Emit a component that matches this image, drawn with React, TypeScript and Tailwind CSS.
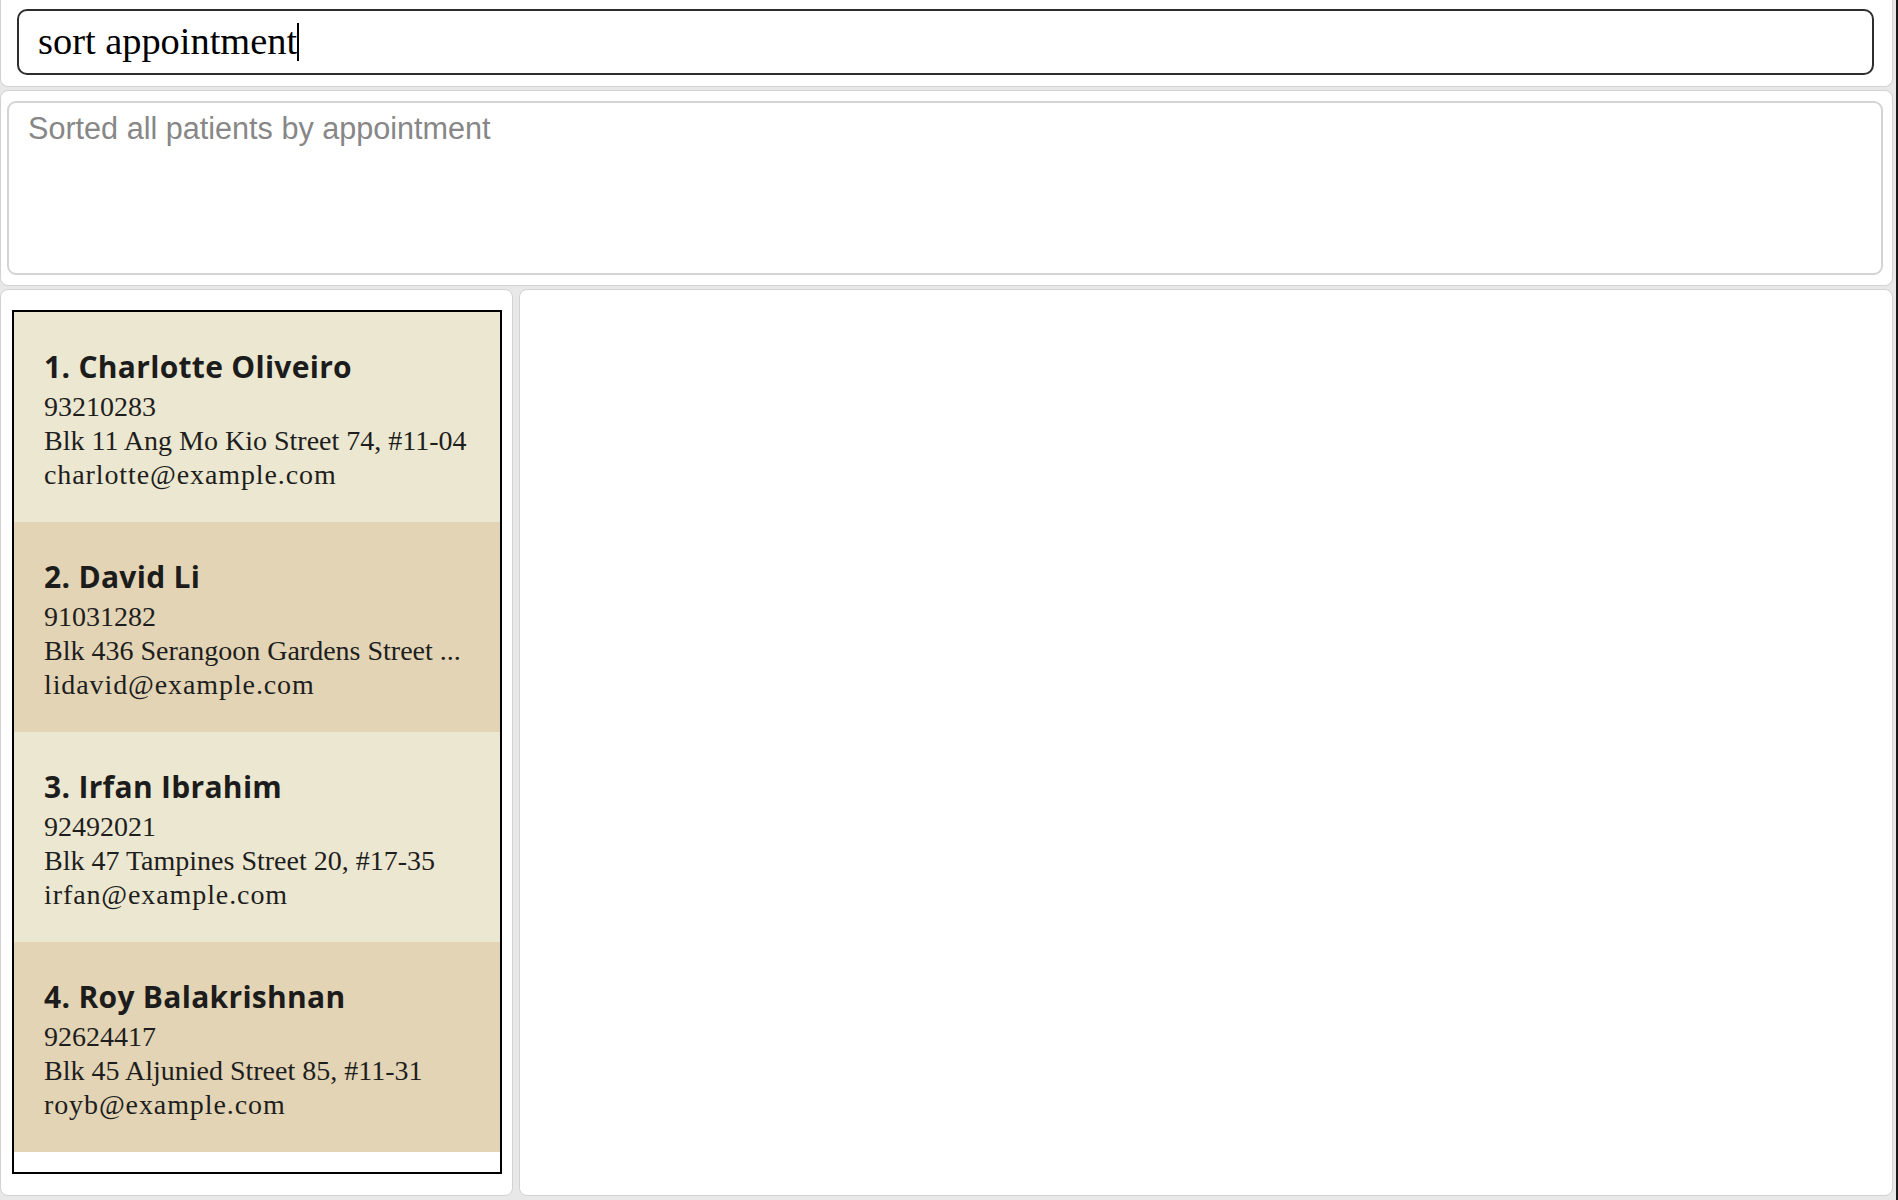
import React from "react";

const patients = [
  { n: "1. Charlotte Oliveiro", p: "93210283", a: "Blk 11 Ang Mo Kio Street 74, #11-04", e: "charlotte@example.com" },
  { n: "2. David Li", p: "91031282", a: "Blk 436 Serangoon Gardens Street ...", e: "lidavid@example.com" },
  { n: "3. Irfan Ibrahim", p: "92492021", a: "Blk 47 Tampines Street 20, #17-35", e: "irfan@example.com" },
  { n: "4. Roy Balakrishnan", p: "92624417", a: "Blk 45 Aljunied Street 85, #11-31", e: "royb@example.com" },
];

export default function App() {
  return (
    <div className="w-[1898px] h-[1200px] flex bg-[#e8e8e8] overflow-hidden">
      <div className="flex-1 flex flex-col gap-[3px] pr-[3px] pb-[4px]">
        <div className="h-[87px] shrink-0 bg-white rounded-b-[8px] border-x border-b border-[#d2d2d2] pt-[9px] pl-[16px] pr-[18px]">
          <div className="h-[66px] border-2 border-[#2e2e2e] rounded-[10px] pl-[19px] flex items-center font-['Liberation_Serif',serif] text-[38.4px] text-black">
            <span>sort appointment</span>
            <span className="inline-block w-[2px] h-[38px] bg-black" />
          </div>
        </div>
        <div className="h-[196px] shrink-0 bg-white rounded-[8px] border border-[#d2d2d2] pt-[10px] pb-[10px] pl-[6px] pr-[9px]">
          <div className="h-full border-2 border-[#d4d4d4] rounded-[9px] pl-[19px] pt-[8px] font-['Liberation_Sans',Arial,sans-serif] text-[30.6px] text-[#878787] leading-[35px]">
            Sorted all patients by appointment
          </div>
        </div>
        <div className="flex-1 flex gap-[6px]">
          <div className="w-[513px] bg-white rounded-[8px] border border-[#d2d2d2] pt-[20px] pl-[11px] pr-[10px] pb-[21px]">
            <div className="h-full border-2 border-black bg-white">
              {patients.map((pt, i) => (
                <div
                  key={i}
                  className={`h-[210px] pl-[30px] pt-[37px] ${i % 2 === 0 ? "bg-[#ece7d0]" : "bg-[#e2d4b4]"}`}
                >
                  <div className="font-['Open_Sans',sans-serif] font-bold text-[30px] tracking-[0.3px] leading-[36px] text-[#1c1c1c]">{pt.n}</div>
                  <div className="mt-[5px] font-['Liberation_Serif',serif] text-[28px] leading-[34px] text-[#1e1e1e] whitespace-nowrap">
                    <div>{pt.p}</div>
                    <div>{pt.a}</div>
                    <div className="tracking-[0.9px]">{pt.e}</div>
                  </div>
                </div>
              ))}
            </div>
          </div>
          <div className="flex-1 bg-white rounded-[8px] border border-[#d2d2d2]" />
        </div>
      </div>
      <div className="w-[2px] bg-[#1a1a1a]" />
    </div>
  );
}
